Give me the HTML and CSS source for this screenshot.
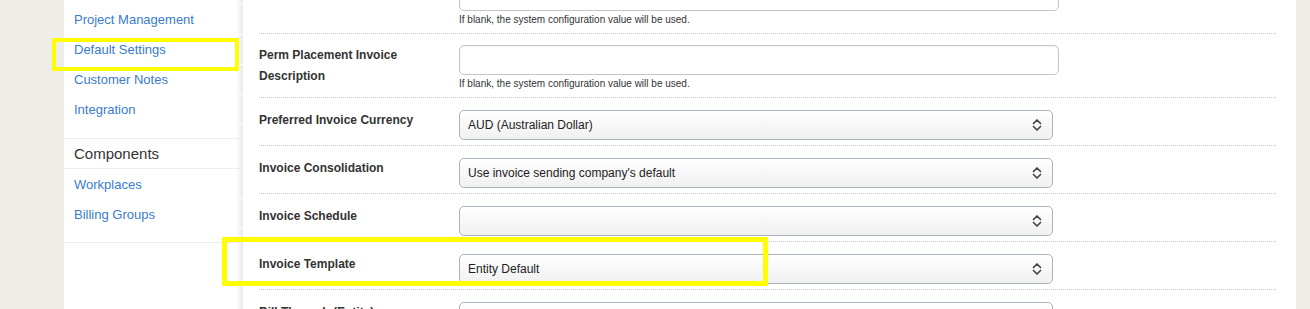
FILE: index.html
```html
<!DOCTYPE html>
<html lang="en">
<head>
    <meta charset="UTF-8">
    <meta name="viewport" content="width=device-width, initial-scale=1.0">
    <title>Customer - Default Settings</title>
    <link rel="stylesheet" href="styles.css">
</head>
<body>
    <div class="page">
        <aside class="sidebar">
            <div class="nav-group nav-first">
                <ul class="nav-list">
                    <li><a href="#">Details</a></li>
                    <li><a href="#">Project Management</a></li>
                    <li><a href="#">Default Settings</a></li>
                    <li><a href="#">Customer Notes</a></li>
                    <li><a href="#">Integration</a></li>
                </ul>
            </div>
            <div class="nav-group">
                <h3 class="nav-heading">Components</h3>
                <ul class="nav-list">
                    <li><a href="#">Workplaces</a></li>
                    <li><a href="#">Billing Groups</a></li>
                </ul>
            </div>
        </aside>

        <main class="content">
            <div class="form">
                <div class="form-row form-row-text">
                    <label class="form-label" for="invoice-desc">Invoice Description</label>
                    <div class="form-field">
                        <input type="text" id="invoice-desc">
                        <div class="help">If blank, the system configuration value will be used.</div>
                    </div>
                </div>

                <div class="form-row form-row-text">
                    <label class="form-label" for="perm-desc">Perm Placement Invoice Description</label>
                    <div class="form-field">
                        <input type="text" id="perm-desc">
                        <div class="help">If blank, the system configuration value will be used.</div>
                    </div>
                </div>

                <div class="form-row">
                    <label class="form-label" for="currency">Preferred Invoice Currency</label>
                    <div class="form-field">
                        <select id="currency">
                            <option>AUD (Australian Dollar)</option>
                        </select>
                    </div>
                </div>

                <div class="form-row">
                    <label class="form-label" for="consolidation">Invoice Consolidation</label>
                    <div class="form-field">
                        <select id="consolidation">
                            <option>Use invoice sending company's default</option>
                        </select>
                    </div>
                </div>

                <div class="form-row">
                    <label class="form-label" for="schedule">Invoice Schedule</label>
                    <div class="form-field">
                        <select id="schedule">
                            <option></option>
                        </select>
                    </div>
                </div>

                <div class="form-row">
                    <label class="form-label" for="template">Invoice Template</label>
                    <div class="form-field">
                        <select id="template">
                            <option>Entity Default</option>
                        </select>
                    </div>
                </div>

                <div class="form-row">
                    <label class="form-label" for="bill-through">Bill Through (Entity)</label>
                    <div class="form-field">
                        <select id="bill-through">
                            <option></option>
                        </select>
                    </div>
                </div>
            </div>
        </main>
    </div>

    <!-- review highlights -->
    <div class="highlight highlight-nav"></div>
    <div class="highlight highlight-template"></div>
</body>
</html>
```

FILE: styles.css
```css
* {
    margin: 0;
    padding: 0;
    box-sizing: border-box;
    font-family: 'Liberation Sans', Arial, Helvetica, sans-serif;
}

html, body {
    height: 100%;
    overflow: hidden;
}

body {
    background: #efede7;
    position: relative;
}

.page {
    display: flex;
    height: 100%;
    margin: 0 14px 0 64px;
    background: #fff;
}

/* Sidebar */

.sidebar {
    width: 179px;
    flex-shrink: 0;
    background: linear-gradient(to left, #e9e9e9, #fff 7px);
}

.nav-first {
    margin-top: -25px;
}

.nav-group {
    padding-bottom: 13px;
    border-bottom: 1px solid #ececec;
}

.nav-list {
    list-style: none;
}

.nav-list li {
    height: 30px;
    border-bottom: 1px solid #fff;
    display: flex;
    align-items: center;
    padding-left: 10px;
}

.nav-heading + .nav-list li {
    padding-top: 1px;
}

.nav-list a {
    color: #3a7ccc;
    text-decoration: none;
    font-size: 13px;
}

.nav-heading {
    height: 30px;
    display: flex;
    align-items: center;
    padding-left: 10px;
    font-size: 15px;
    font-weight: normal;
    color: #333;
    border-bottom: 1px solid #ececec;
}

/* Form */

.content {
    flex: 1;
    padding: 0 20px 0 16px;
}

.form {
    margin-top: -30px;
}

.form-row {
    display: flex;
    padding: 12px 0 5px;
    border-bottom: 1px dotted #c4c4c4;
}

.form-row-text {
    padding-top: 11px;
}

.form-label {
    width: 200px;
    flex-shrink: 0;
    padding-right: 16px;
    font-size: 12px;
    font-weight: 700;
    line-height: 21px;
    color: #333;
}

.form-field {
    flex: 1;
}

input[type="text"] {
    display: block;
    width: 600px;
    height: 30px;
    padding: 0 8px;
    border: 1px solid #c3c6c9;
    border-radius: 5px;
    background: #fff;
    box-shadow: inset 0 1px 2px rgba(0, 0, 0, 0.06);
    font-size: 12px;
}

.help {
    font-size: 10px;
    line-height: 17px;
    color: #333;
}

select {
    display: block;
    width: 594px;
    height: 30px;
    padding: 0 30px 0 8px;
    border: 1px solid #a9b3bb;
    border-radius: 5px;
    font-size: 12px;
    color: #222;
    appearance: none;
    background:
        url("data:image/svg+xml;charset=UTF-8,%3csvg xmlns='http://www.w3.org/2000/svg' viewBox='0 0 10 14' fill='none' stroke='%23444' stroke-width='1.7' stroke-linecap='round' stroke-linejoin='round'%3e%3cpolyline points='1.5 5.5 5 2 8.5 5.5'/%3e%3cpolyline points='1.5 8.5 5 12 8.5 8.5'/%3e%3c/svg%3e") no-repeat right 10px center/10px 14px,
        linear-gradient(#fff, #f0f0f0);
}

/* Highlight boxes drawn over the page */

.highlight {
    position: absolute;
    border: 4px solid #ffff00;
    pointer-events: none;
}

.highlight-nav {
    left: 52px;
    top: 38px;
    width: 187px;
    height: 33px;
}

.highlight-template {
    left: 222px;
    top: 237px;
    width: 546px;
    height: 49px;
    border-width: 5px;
}
```
